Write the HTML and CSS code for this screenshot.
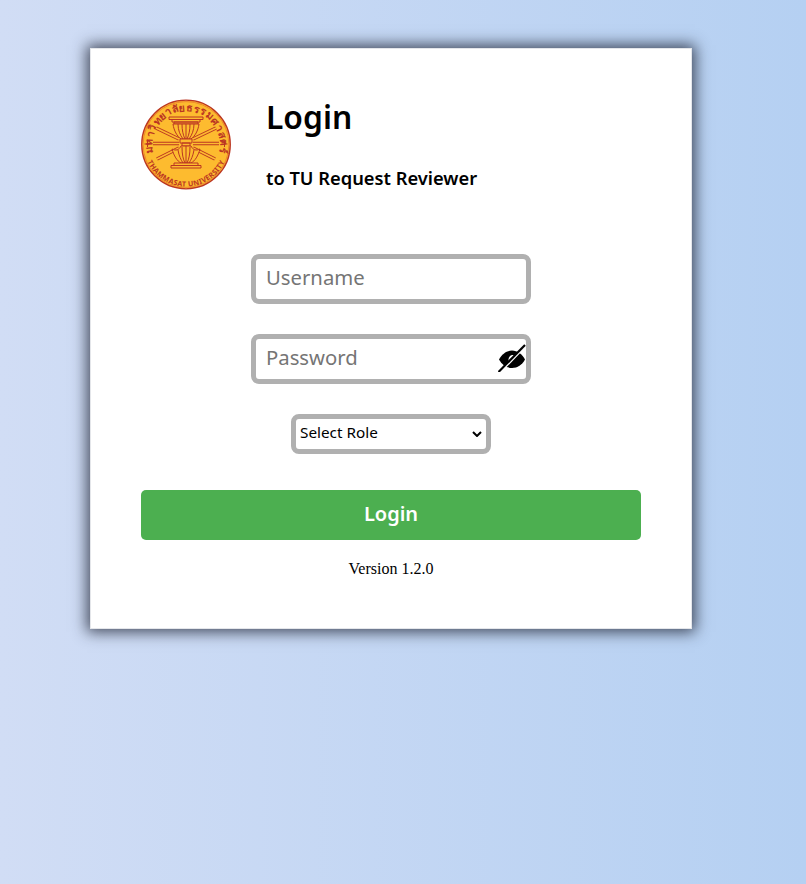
FILE: index.html
```html
<!DOCTYPE html>
<html lang="en">
<head>
<meta charset="utf-8">
<title>Login</title>
<link rel="stylesheet" href="styles.css">
</head>
<body>
<main class="card">
  <header class="head">
    <svg class="logo" viewBox="0 0 90 91" aria-hidden="true">
      <defs>
        <path id="arcTop" d="M16.420 64.500A34 34 0 1 1 73.580 64.500"/>
        <path id="arcBot" d="M7 26A42.500 42.500 0 1 0 83 26"/>
      </defs>
      <circle cx="45" cy="45.500" r="44.300" class="seal-disc"/>
      <circle cx="45" cy="45.500" r="42.900" class="seal-inner"/>
      <text class="seal-th"><textPath href="#arcTop" startOffset="50%" text-anchor="middle">มหาวิทยาลัยธรรมศาสตร์</textPath></text>
      <text class="seal-en"><textPath href="#arcBot" startOffset="50%" text-anchor="middle">THAMMASAT UNIVERSITY</textPath></text>
      <path class="seal-line" d="M3.500 45h6M6.500 42v6M80.500 45h6M83.500 42v6"/>
      <path class="ray-out" d="M15 29L38 40M12 44.500H38M16 60L38 49M75 29L52 40M78 44.500H52M74 60L52 49"/>
      <path class="ray-in" d="M15 29L38 40M12 44.500H38M16 60L38 49M75 29L52 40M78 44.500H52M74 60L52 49"/>
      <path class="seal-shape" d="M28 18H62V20.500H28zM31 20.500H59V23H31zM33 23H57V25H33z"/>
      <path class="seal-shape" d="M32 25C33 32 36 37 40 40H50C54 37 57 32 58 25z"/>
      <path class="seal-line" d="M37 25C37 31 39 36 42 40M41 25C41 31 42 36 44 40M45 25V40M49 25C49 31 48 36 46 40M53 25C53 31 51 36 48 40"/>
      <path class="seal-shape" d="M39 40H51V44H39zM41 44H49V47H41z"/>
      <path class="seal-shape" d="M31 50C33 57 36 62 40 64H50C54 62 57 57 59 50C55 52 52 51 50 47H40C38 51 35 52 31 50z"/>
      <path class="seal-line" d="M37 51C38 57 40 61 42 64M41 48C41 55 42 60 44 64M45 47V64M49 48C49 55 48 60 46 64M53 51C52 57 50 61 48 64"/>
      <path class="seal-shape" d="M33 64H57V66.500H33zM30 66.500H60V69H30z"/>
    </svg>
    <div class="titles">
      <h1 class="title">Login</h1>
      <p class="subtitle">to TU Request Reviewer</p>
    </div>
  </header>
  <form class="form">
    <input class="field" type="text" placeholder="Username">
    <div class="pass">
      <input class="field" type="password" placeholder="Password">
      <svg class="eye" viewBox="0 0 28 28" aria-hidden="true">
        <path d="M1 15.500C4 10 8.500 6.500 14 6.500s10 3.500 13 9c-3 5.500-7.500 8.500-13 8.500S4 21 1 15.500z"/>
        <path class="eye-pupil" d="M10.500 16c0-2.800 1.700-5 4.300-5 .9 0 1.600.2 2.200.6l-5.700 6.800c-.5-.7-.8-1.500-.8-2.400z"/>
        <path class="eye-cut" d="M2.500 28L28.500 1"/>
        <path class="eye-slash" d="M0.500 28L27 1"/>
      </svg>
    </div>
    <select class="role">
      <option>Select Role</option>
    </select>
    <button class="submit" type="button">Login</button>
    <p class="version">Version 1.2.0</p>
  </form>
</main>
</body>
</html>
```
FILE: styles.css
```css
* { box-sizing: border-box; }
html, body { height: 100%; }
body {
  margin: 0;
  padding: 48px 0 0 90px;
  background: linear-gradient(to right, #d1ddf5, #b5d0f2);
  font-family: "Noto Sans", sans-serif;
}
.card {
  width: 602px;
  height: 581px;
  padding: 50px;
  background: #fff;
  border: 1px solid #e4e6ea;
  box-shadow: 0 0 14px 3px rgba(30, 35, 50, 0.8);
}
.head { display: flex; gap: 35px; align-items: flex-start; height: 155px; }
.logo { width: 90px; height: 91px; flex: none; }
.seal-disc { fill: #fdbb2f; stroke: #bb3622; stroke-width: 1.300; }
.seal-inner { fill: none; stroke: #e0662a; stroke-width: 0.600; }
.seal-th { font: 700 10.500px "Noto Sans", "DejaVu Sans", sans-serif; letter-spacing: 0.500px; fill: #bb3622; }
.seal-en { font: 700 7.200px "Noto Sans", sans-serif; letter-spacing: 0.300px; fill: #bb3622; }
.seal-line { fill: none; stroke: #bb3622; stroke-width: 1; }
.seal-shape { fill: #fdbb2f; stroke: #bb3622; stroke-width: 1; }
.ray-out { fill: none; stroke: #bb3622; stroke-width: 3.600; }
.ray-in { fill: none; stroke: #fdbb2f; stroke-width: 1.600; }
.title { margin: -2px 0 0; font-size: 31.800px; line-height: 40px; font-weight: 600; color: #000; }
.subtitle { margin: 29px 0 0; font-size: 18.300px; line-height: 24px; font-weight: 600; color: #000; }
.form { display: flex; flex-direction: column; align-items: center; }
.field {
  display: block;
  width: 280px;
  height: 50px;
  padding: 0 10px 4px;
  border: 5px solid #b0b0b0;
  border-radius: 8px;
  background: #fff;
  font: 400 20.300px "Noto Sans", sans-serif;
  color: #000;
  outline: none;
}
.field::placeholder { color: #757575; opacity: 1; }
.pass { position: relative; margin-top: 30px; }
.eye { position: absolute; right: 5px; top: 10px; width: 28px; height: 28px; }
.eye-pupil { fill: #fff; }
.eye-cut { fill: none; stroke: #fff; stroke-width: 2; }
.eye-slash { fill: none; stroke: #000; stroke-width: 2.200; }
.role {
  display: block;
  width: 200px;
  height: 40px;
  margin-top: 30px;
  padding: 0 0 5px 4px;
  border: 5px solid #b0b0b0;
  border-radius: 8px;
  background: #fff url("data:image/svg+xml,%3Csvg xmlns='http://www.w3.org/2000/svg' width='10' height='6' viewBox='0 0 10 6'%3E%3Cpath d='M1 1l4 4 4-4' fill='none' stroke='%23000' stroke-width='2'/%3E%3C/svg%3E") no-repeat right 4px center;
  appearance: none;
  font: 400 15.300px "Noto Sans", sans-serif;
  color: #000;
  outline: none;
}
.submit {
  width: 500px;
  height: 50px;
  margin-top: 36px;
  padding: 0 0 4px;
  border: 0;
  border-radius: 5px;
  background: #4caf50;
  color: #fff;
  font: 600 20px "Noto Sans", sans-serif;
}
.version {
  margin: 18px 0 0;
  font: 400 16px/21px "Liberation Serif", serif;
  color: #000;
}
```
